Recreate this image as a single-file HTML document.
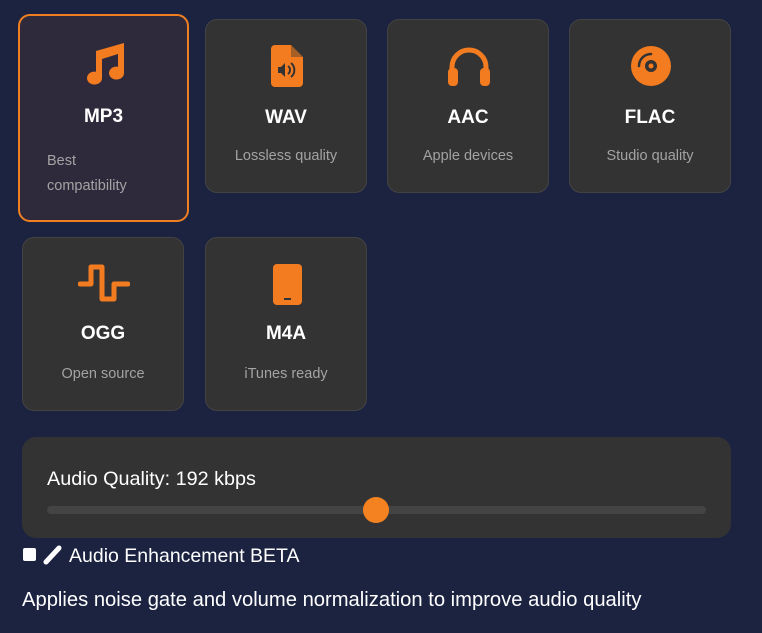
<!DOCTYPE html>
<html><head><style>
body{margin:0;width:762px;height:633px;background:#1b2341;font-family:"Liberation Sans",sans-serif;position:relative;overflow:hidden}
.c{position:absolute;width:162px;height:174px;background:#333;border:1px solid #434343;border-radius:12px;box-sizing:border-box;text-align:center}
.c svg{position:absolute;left:58px;top:22px}
.t{position:absolute;left:0;right:0;top:86px;color:#fff;font-weight:bold;font-size:19px}
.s{position:absolute;left:0;right:0;top:128px;color:#a3a3a3;font-size:14.5px}
.sel{left:18px;top:14px;width:171px;height:208px;border:2px solid #f07f22;background:#2f2a3b}
</style></head><body>
<div class="c sel">
<svg style="left:62px;top:26px" width="44" height="44" viewBox="0 0 44 44"><path fill="#f47c20" d="M14 9 L42 1 V31 a7.5 6.5 0 1 1 -6 -6.3 V12 L20 17 V36 a7.5 6.5 0 1 1 -6 -6.3 Z"/></svg>
<div class="t" style="top:90px">MP3</div>
<div class="s" style="text-align:left;left:27px;top:133px;line-height:25px">Best<br>compatibility</div>
</div>
<div class="c" style="left:205px;top:19px">
<svg style="left:65px;top:25px" width="33" height="42" viewBox="0 0 33 42"><path fill="#f47c20" d="M4 0 H20 L32 12 V38 a4 4 0 0 1 -4 4 H4 a4 4 0 0 1 -4 -4 V4 a4 4 0 0 1 4 -4Z"/><path fill="#333" d="M20 0 V12 H32Z" opacity=".4"/><path fill="#333" d="M7 22 H10 L14 18 V32 L10 28 H7Z"/><path d="M17 21 a5 5 0 0 1 0 8 M20 18 a9 9 0 0 1 0 14" stroke="#333" stroke-width="2" fill="none"/></svg>
<div class="t" style="top:87px">WAV</div><div class="s">Lossless quality</div></div>
<div class="c" style="left:387px;top:19px">
<svg style="left:60px;top:26px" width="42" height="40" viewBox="0 0 42 40"><path d="M4 30 V21 a17 17 0 0 1 34 0 V30" stroke="#f47c20" stroke-width="5" fill="none"/><rect x="0" y="22" width="10" height="18" rx="4" fill="#f47c20"/><rect x="32" y="22" width="10" height="18" rx="4" fill="#f47c20"/></svg>
<div class="t" style="top:87px">AAC</div><div class="s">Apple devices</div></div>
<div class="c" style="left:569px;top:19px">
<svg style="left:61px;top:26px" width="40" height="40" viewBox="0 0 40 40"><circle cx="20" cy="20" r="20" fill="#f47c20"/><circle cx="20" cy="20" r="6" fill="#333"/><circle cx="20" cy="20" r="2.5" fill="#f47c20"/><path d="M8 20 a12 12 0 0 1 12 -12" stroke="#333" stroke-width="2.5" fill="none" stroke-linecap="round"/></svg>
<div class="t" style="top:87px">FLAC</div><div class="s">Studio quality</div></div>
<div class="c" style="left:22px;top:237px">
<svg style="left:55px;top:26px" width="52" height="40" viewBox="0 0 52 40"><path d="M2 20 H13 V3 H24 V35 H36 V20 H50" stroke="#f47c20" stroke-width="5" fill="none" stroke-linejoin="round" stroke-linecap="round"/></svg>
<div class="t" style="top:85px">OGG</div><div class="s">Open source</div></div>
<div class="c" style="left:205px;top:237px">
<svg style="left:67px;top:26px" width="29" height="41" viewBox="0 0 29 41"><rect width="29" height="41" rx="4" fill="#f47c20"/><rect x="11" y="34" width="7" height="2" fill="#333"/></svg>
<div class="t" style="top:85px">M4A</div><div class="s">iTunes ready</div></div>
<div style="position:absolute;left:22px;top:437px;width:709px;height:101px;background:#333;border-radius:14px">
<div style="position:absolute;left:25px;top:31px;color:#fff;font-size:19.8px">Audio Quality: 192 kbps</div>
<div style="position:absolute;left:25px;top:69px;width:659px;height:8px;border-radius:4px;background:#444"></div>
<div style="position:absolute;left:341px;top:60px;width:26px;height:26px;border-radius:50%;background:#f58220"></div>
</div>
<div style="position:absolute;left:23px;top:548px;width:13px;height:13px;background:#fff;border-radius:2px"></div>
<svg style="position:absolute;left:43px;top:545px" width="20" height="20" viewBox="0 0 20 20"><path d="M3 17 L16 3" stroke="#fff" stroke-width="5" stroke-linecap="round"/></svg>
<div style="position:absolute;left:69px;top:545px;color:#fff;font-size:19.5px">Audio Enhancement BETA</div>
<div style="position:absolute;left:22px;top:589px;color:#fff;font-size:20.2px">Applies noise gate and volume normalization to improve audio quality</div>
</body></html>
